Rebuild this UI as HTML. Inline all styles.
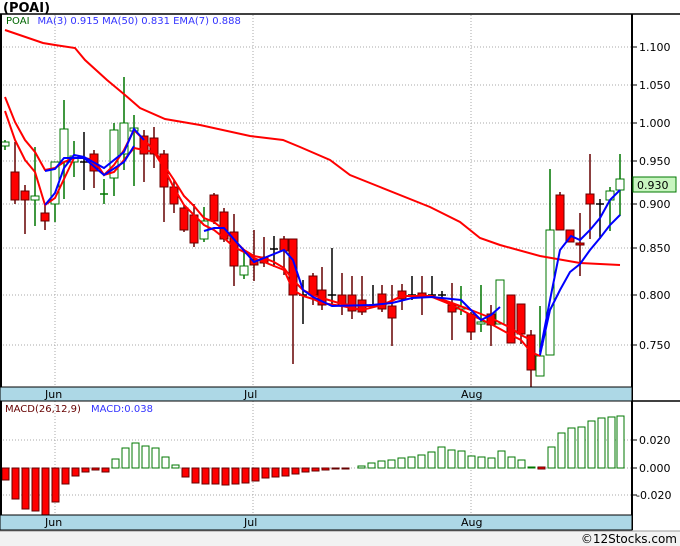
<!DOCTYPE html>
<html><head><meta charset="utf-8"><style>
body{margin:0;width:680px;height:546px;overflow:hidden;background:#fff}
</style></head><body>
<svg width="680" height="546" xmlns="http://www.w3.org/2000/svg" font-family="DejaVu Sans, Liberation Sans, sans-serif" style="display:block">
<rect x="0" y="0" width="680" height="546" fill="#fff"/>
<rect x="0" y="531" width="680" height="15" fill="#f2f2f2"/>
<text x="3" y="12" font-size="13" font-weight="bold" fill="#000">(POAI)</text>
<text x="677" y="543" font-size="12" fill="#000" text-anchor="end">©12Stocks.com</text>
<g stroke="#aaa" stroke-dasharray="1,2" stroke-width="1">
<line x1="0" y1="47" x2="632" y2="47"/><line x1="0" y1="85" x2="632" y2="85"/><line x1="0" y1="123" x2="632" y2="123"/><line x1="0" y1="161" x2="632" y2="161"/><line x1="0" y1="204" x2="632" y2="204"/><line x1="0" y1="248" x2="632" y2="248"/><line x1="0" y1="295" x2="632" y2="295"/><line x1="0" y1="345" x2="632" y2="345"/>
<line x1="55" y1="15" x2="55" y2="387"/><line x1="253" y1="15" x2="253" y2="387"/><line x1="471" y1="15" x2="471" y2="387"/>
<line x1="0" y1="440" x2="632" y2="440"/><line x1="0" y1="495" x2="632" y2="495"/><line x1="0" y1="468" x2="632" y2="468"/>
<line x1="55" y1="401" x2="55" y2="515"/><line x1="253" y1="401" x2="253" y2="515"/><line x1="471" y1="401" x2="471" y2="515"/>
</g>
<text x="6" y="24" font-size="10" fill="#060">POAI<tspan fill="#33f" dx="8">MA(3)  0.915  MA(50)  0.831  EMA(7)  0.888</tspan></text>
<text x="5" y="412" font-size="10" fill="#600">MACD(26,12,9)<tspan fill="#33f" dx="10">MACD:0.038</tspan></text>

<!-- green wicks -->
<path stroke="#070" stroke-width="1.5" fill="none" d="M5 140V150M35 147V226M55 162V222M64 100V199M74 141V177M104 179V204M114 123V196M124 77V170M134 115V186M204 207V242M244 249V279M461 286V315M481 285V332M500 280V324M540 306V376M550 169V355M610 187V231M620 154V216M100 194H108"/>
<!-- red wicks -->
<path stroke="#600" stroke-width="1.5" fill="none" d="M15 142V204M25 185V234M45 205V230M94 150V188M144 130V182M154 127V168M164 150V222M174 180V213M184 205V232M194 204V247M214 193V224M224 208V242M234 214V286M254 230V281M264 237V267M284 236V275M293 239V364M313 273V305M322 267V310M342 273V315M352 276V319M362 276V315M382 285V312M392 285V346M402 284V310M422 276V315M452 283V340M471 312V340M491 305V346M511 295V343M521 304V344M531 330V387M560 192V230M570 230V242M580 213V276M590 154V239"/>
<!-- black doji -->
<path stroke="#000" stroke-width="1.5" fill="none" d="M84 132V190M80 162H88M274 236V267M270 249H278M303 280V324M299 295H307M332 248V304M328 295H336M373 285V308M369 305H377M412 276V300M408 295H416M432 276V298M428 295H436M442 291V298M438 295H446M600 199V239M596 204H604"/>
<!-- green bodies -->
<g fill="#fff" stroke="#070">
<rect x="1" y="142" width="8" height="4"/><rect x="31" y="196" width="8" height="4"/><rect x="51" y="162" width="8" height="42"/><rect x="60" y="129" width="8" height="33"/><rect x="70" y="156" width="8" height="6"/><rect x="110" y="130" width="8" height="48"/><rect x="120" y="123" width="8" height="31"/><rect x="130" y="128" width="8" height="3"/><rect x="200" y="221" width="8" height="18"/><rect x="240" y="266" width="8" height="9"/><rect x="457" y="307" width="8" height="2"/><rect x="477" y="322" width="8" height="2"/><rect x="496" y="280" width="8" height="44"/><rect x="536" y="356" width="8" height="20"/><rect x="546" y="230" width="8" height="125"/><rect x="606" y="191" width="8" height="9"/><rect x="616" y="179" width="8" height="11"/>
</g>
<!-- red bodies -->
<g fill="#f00" stroke="#600">
<rect x="11" y="172" width="8" height="28"/><rect x="21" y="191" width="8" height="9"/><rect x="41" y="213" width="8" height="8"/><rect x="90" y="154" width="8" height="17"/><rect x="140" y="136" width="8" height="18"/><rect x="150" y="138" width="8" height="16"/><rect x="160" y="154" width="8" height="33"/><rect x="170" y="187" width="8" height="17"/><rect x="180" y="208" width="8" height="22"/><rect x="190" y="215" width="8" height="28"/><rect x="210" y="195" width="8" height="26"/><rect x="220" y="212" width="8" height="27"/><rect x="230" y="232" width="8" height="34"/><rect x="250" y="259" width="8" height="6"/><rect x="260" y="257" width="8" height="6"/><rect x="280" y="239" width="8" height="12"/><rect x="289" y="239" width="8" height="56"/><rect x="309" y="276" width="8" height="19"/><rect x="318" y="290" width="8" height="15"/><rect x="338" y="295" width="8" height="9"/><rect x="348" y="295" width="8" height="16"/><rect x="358" y="300" width="8" height="12"/><rect x="378" y="294" width="8" height="15"/><rect x="388" y="306" width="8" height="12"/><rect x="398" y="291" width="8" height="8"/><rect x="418" y="293" width="8" height="3"/><rect x="448" y="305" width="8" height="7"/><rect x="467" y="314" width="8" height="18"/><rect x="487" y="314" width="8" height="11"/><rect x="507" y="295" width="8" height="48"/><rect x="517" y="304" width="8" height="30"/><rect x="527" y="335" width="8" height="35"/><rect x="556" y="195" width="8" height="35"/><rect x="566" y="230" width="8" height="12"/><rect x="576" y="243" width="8" height="2"/><rect x="586" y="194" width="8" height="10"/>
</g>

<!-- MA50 -->
<polyline fill="none" stroke="#f00" stroke-width="2" points="5,30 43,43 55,45 75,48 85,60 107,80 125,95 140,108 165,119 200,125 250,136 283,140 300,147 330,160 350,175 380,187 430,207 460,222 480,238 500,245 540,256 580,263 620,265"/>
<polyline fill="none" stroke="#f00" stroke-width="2" points="5,97 15,122 25,140 35,152 45,170 55,168 64,162 74,158 84,158 94,160 104,175 114,165 124,150 134,130 144,140 154,150 164,165 174,180 184,196 194,206 204,218 214,222 224,230 234,240 244,250 254,256 264,258 274,262 284,268 293,280 303,290 313,295 322,298 342,304 362,306 382,306 402,296 422,296 432,296 452,303 471,310 491,318 511,328 521,335 531,340"/>
<polyline fill="none" stroke="#f00" stroke-width="2" points="5,111 15,140 25,160 35,172 45,205 55,198 64,179 74,158 84,158 94,160 104,175 114,172 124,160 134,148 144,150 154,152 164,168 174,188 184,205 194,215 204,225 214,230 224,238 234,247 244,252 254,258 264,262 274,266 284,270 293,290 303,296 313,299 322,303 342,306 362,310 382,305 402,296 422,296 432,297 452,305 471,315 491,324 511,335 521,340 531,352 540,356"/>
<polyline fill="none" stroke="#00f" stroke-width="2" points="45,205 55,193 64,168 74,155 84,157 104,168 124,152 134,129 144,140"/>
<polyline fill="none" stroke="#00f" stroke-width="2" points="45,171 55,169 64,158 74,158 84,158 104,175 124,162 134,146"/>
<polyline fill="none" stroke="#00f" stroke-width="2" points="204,231 214,228 224,228 254,262 264,258 284,250 293,260 303,290 313,297 332,306 372,305 392,303 412,298 432,297 461,300 481,320 491,315 500,307"/>
<polyline fill="none" stroke="#00f" stroke-width="2" points="540,352 550,300 560,250 571,236 580,240 590,230 600,218 610,200 620,190"/>
<polyline fill="none" stroke="#00f" stroke-width="2" points="540,355 550,310 560,290 570,272 580,264 590,250 600,238 610,225 620,215"/>

<!-- MACD -->
<g fill="#f00" stroke="#600">
<rect x="2" y="468" width="7" height="12"/><rect x="12" y="468" width="7" height="31"/><rect x="22" y="468" width="7" height="41"/><rect x="32" y="468" width="7" height="43"/><rect x="42" y="468" width="7" height="47"/><rect x="52" y="468" width="7" height="34"/><rect x="62" y="468" width="7" height="16"/><rect x="72" y="468" width="7" height="8"/><rect x="82" y="468" width="7" height="4"/><rect x="92" y="468" width="7" height="2"/><rect x="102" y="468" width="7" height="4"/>
<rect x="182" y="468" width="7" height="9"/><rect x="192" y="468" width="7" height="15"/><rect x="202" y="468" width="7" height="16"/><rect x="212" y="468" width="7" height="16"/><rect x="222" y="468" width="7" height="17"/><rect x="232" y="468" width="7" height="16"/><rect x="242" y="468" width="7" height="15"/><rect x="252" y="468" width="7" height="13"/><rect x="262" y="468" width="7" height="10"/><rect x="272" y="468" width="7" height="9"/><rect x="282" y="468" width="7" height="8"/><rect x="292" y="468" width="7" height="6"/><rect x="302" y="468" width="7" height="4"/><rect x="312" y="468" width="7" height="3"/><rect x="322" y="468" width="7" height="2"/><rect x="332" y="468" width="7" height="1"/><rect x="342" y="468" width="7" height="1"/><rect x="538" y="467" width="7" height="2"/>
</g>
<g fill="#fff" stroke="#070">
<rect x="112" y="459" width="7" height="9"/><rect x="122" y="448" width="7" height="20"/><rect x="132" y="443" width="7" height="25"/><rect x="142" y="446" width="7" height="22"/><rect x="152" y="448" width="7" height="20"/><rect x="162" y="457" width="7" height="11"/><rect x="172" y="465" width="7" height="3"/>
<rect x="358" y="466" width="7" height="2"/><rect x="368" y="463" width="7" height="5"/><rect x="378" y="461" width="7" height="7"/><rect x="388" y="460" width="7" height="8"/><rect x="398" y="458" width="7" height="10"/><rect x="408" y="457" width="7" height="11"/><rect x="418" y="455" width="7" height="13"/><rect x="428" y="452" width="7" height="16"/><rect x="438" y="447" width="7" height="21"/><rect x="448" y="450" width="7" height="18"/><rect x="458" y="451" width="7" height="17"/><rect x="468" y="456" width="7" height="12"/><rect x="478" y="457" width="7" height="11"/><rect x="488" y="458" width="7" height="10"/><rect x="498" y="451" width="7" height="17"/><rect x="508" y="457" width="7" height="11"/><rect x="518" y="460" width="7" height="8"/><rect x="528" y="467" width="7" height="1"/>
<rect x="548" y="447" width="7" height="21"/><rect x="558" y="433" width="7" height="35"/><rect x="568" y="428" width="7" height="40"/><rect x="578" y="427" width="7" height="41"/><rect x="588" y="421" width="7" height="47"/><rect x="598" y="418" width="7" height="50"/><rect x="608" y="417" width="7" height="51"/><rect x="617" y="416" width="7" height="52"/>
</g>

<!-- frames -->
<line x1="1" y1="14" x2="1" y2="530" stroke="#000" stroke-width="2"/>
<line x1="0" y1="14" x2="680" y2="14" stroke="#000" stroke-width="1.5"/>
<line x1="632" y1="14" x2="632" y2="530" stroke="#000" stroke-width="2"/>
<rect x="0" y="387" width="632" height="14" fill="#add8e6" stroke="#000"/>
<rect x="0" y="515" width="632" height="15" fill="#add8e6" stroke="#000"/>
<line x1="632" y1="401" x2="680" y2="401" stroke="#000" stroke-width="1.5"/>
<line x1="0" y1="531" x2="680" y2="531" stroke="#999"/>
<g font-size="11" fill="#000"><text x="45" y="398">Jun</text><text x="244" y="398">Jul</text><text x="461" y="398">Aug</text>
<text x="45" y="526">Jun</text><text x="244" y="526">Jul</text><text x="461" y="526">Aug</text></g>
<g font-size="11" fill="#000">
<text x="639" y="51">1.100</text><text x="639" y="89">1.050</text><text x="639" y="127">1.000</text><text x="639" y="165">0.950</text><text x="639" y="208">0.900</text><text x="639" y="252">0.850</text><text x="639" y="299">0.800</text><text x="639" y="349">0.750</text>
<text x="639" y="444">0.020</text><text x="639" y="472">0.000</text><text x="636" y="499">-0.020</text></g>
<g stroke="#000"><line x1="632" y1="47" x2="637" y2="47"/><line x1="632" y1="85" x2="637" y2="85"/><line x1="632" y1="123" x2="637" y2="123"/><line x1="632" y1="161" x2="637" y2="161"/><line x1="632" y1="204" x2="637" y2="204"/><line x1="632" y1="248" x2="637" y2="248"/><line x1="632" y1="295" x2="637" y2="295"/><line x1="632" y1="345" x2="637" y2="345"/><line x1="632" y1="440" x2="637" y2="440"/><line x1="632" y1="468" x2="637" y2="468"/><line x1="632" y1="495" x2="637" y2="495"/></g>
<rect x="633" y="177" width="43" height="15" fill="#c8f5c0" stroke="#070"/>
<text x="637" y="189" font-size="11" fill="#000">0.930</text>
</svg>
</body></html>
